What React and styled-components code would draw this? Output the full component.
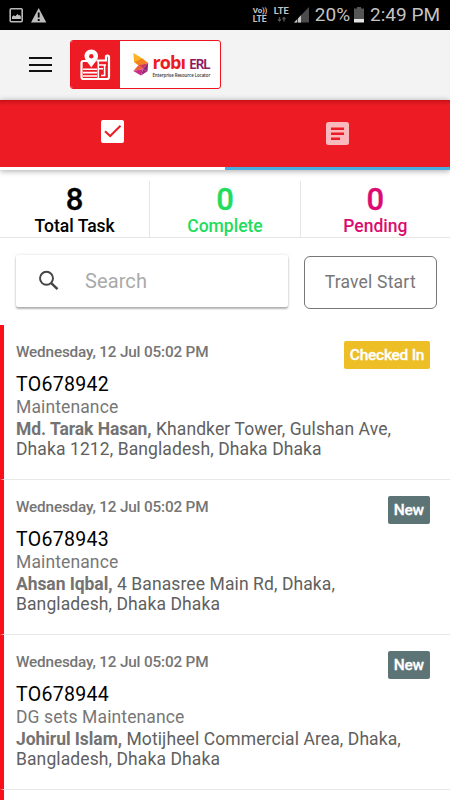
import React, { useState } from 'react';
import styled, { createGlobalStyle } from 'styled-components'

const GlobalStyle = createGlobalStyle`
    * { box-sizing:border-box; }
    body { margin:0; background:#fff; font-family:Roboto, sans-serif; }
    svg { display:block; flex:none; }
`

const AppBlock = styled.div`
    width:450px; height:800px;
    overflow:hidden;
    display:flex; flex-direction:column;
    background:#fff;
`

const StatusBarBlock = styled.div`
    flex:none;
    height:30px; padding:0 10px 0 9px;
    display:flex; align-items:center; justify-content:space-between;
    background:#000; color:#c4c4c4;
    .side { display:flex; align-items:center; height:30px; }
`

const StatusText = styled.span`
    font-size:19px; line-height:32px;
    margin-left:${props=>props.$gap}px;
    white-space:nowrap;
`

const NetworkBlock = styled.div`
    display:flex; flex-direction:column; gap:${props=>props.$rowGap || 0}px;
    width:${props=>props.$width}px; height:17px;
    margin-right:${props=>props.$gap}px;
    font-size:${props=>props.$size}px; font-weight:700; line-height:8px;
    white-space:nowrap;
    .vo { font-size:8px; letter-spacing:-.2px; }
`

const HeaderBlock = styled.header`
    flex:none;
    height:70px; padding:0 29px 1px;
    display:flex; align-items:center; gap:18.5px;
    background:#f3f3f3;
`

const MenuButton = styled.button`
    width:22.5px; height:15px; padding:0;
    border:0; background:none;
    display:flex; flex-direction:column; justify-content:space-between;
    span { height:2px; width:100%; background:#111; }
`

const LogoBlock = styled.div`
    width:151px; height:49px; 
    display:flex;
    border:1px solid #f0141e; border-radius:3px;
    background:#fff;
    overflow:hidden;
    .mark { width:49px; display:flex; align-items:center; justify-content:center; background:#ed1c24; }
    .brand { flex:1; display:flex; align-items:center; padding-left:12.5px; gap:4px; }
`

const BrandText = styled.div`
    padding-top:1px;
    .name { display:flex; align-items:baseline; height:18px; line-height:18px; white-space:nowrap; }
    .robi { font-family:"Open Sans", sans-serif; font-size:18px; font-weight:700; color:#ed1c24; letter-spacing:-.9px; width:36.5px; }
    .erl { font-family:"Noto Sans", sans-serif; font-size:14px; font-weight:600; color:#8d1763; letter-spacing:-1.4px; }
    .sub { margin-top:1px; font-family:"Open Sans", sans-serif; font-size:4.4px; font-weight:600; line-height:6px; color:#333; white-space:nowrap; letter-spacing:-.08px; }
`

const TabBlock = styled.div`
    flex:none;
    height:70px;
    display:flex;
    background:linear-gradient(#c60f16 0, #d8171e 2px, #ed1c24 6px);
    box-shadow:0 1px 6px rgba(0,0,0,.35);
    z-index:1;
`

const TabButton = styled.button`
    flex:1; padding:${props=>props.$top}px 0 0;
    border:0; border-bottom:3px solid ${props=>props.$line};
    background:none;
    display:flex; justify-content:center; align-items:flex-start;
`

const SummaryBlock = styled.div`
    flex:none;
    height:68px; padding-top:11px;
    display:flex;
    border-bottom:1px solid #e6e6e6;
`

const SummaryItem = styled.div`
    flex:1;
    text-align:center;
    color:${props=>props.$color};
    & + & { border-left:1px solid #e6e6e6; }
    strong { display:block; padding-top:1px; font-size:31px; font-weight:500; line-height:36px; -webkit-text-stroke:.3px; }
    span { display:block; margin-top:-1px; font-size:17.5px; font-weight:500; line-height:19px; }
`

const SearchRow = styled.div`
    flex:none;
    height:87px; padding:17px 13px 0 16px;
    display:flex; justify-content:space-between;
`

const SearchBox = styled.label`
    width:271.5px; height:52px; padding-left:22px;
    display:flex; align-items:center; 
    border-radius:2px;
    background:#fff;
    box-shadow:0 2px 2px rgba(0,0,0,.28), 0 0 3px rgba(0,0,0,.14);
    input {
        width:180px; margin-left:25px; padding:0;
        border:0; outline:0; background:none;
        font-family:inherit; font-size:20px; letter-spacing:.1px; color:#333;
        &::placeholder { color:#aaa; opacity:1; }
    }
`

const TravelButton = styled.button`
    width:133.5px; height:53px; margin-top:1px; padding:0 0 2px;
    border:1px solid #777; border-radius:6px;
    background:#fff; color:#777;
    font-family:inherit; font-size:17.5px; letter-spacing:.2px;
`

const TaskList = styled.ul`
    flex:1; min-height:0;
    margin:0; padding:0;
    list-style:none;
`

const TaskItem = styled.li`
    height:155px; padding:16px 20px 0 12px;
    border-left:4px solid #fb0f19;
    border-bottom:1px solid #e8e8e8;
    white-space:nowrap;
    .top { display:flex; justify-content:space-between; height:32px; }
    .date { font-size:15.3px; font-weight:500; line-height:22px; letter-spacing:-.17px; color:#757575; }
    .code { padding-top:1px; font-size:19.5px; line-height:22px; letter-spacing:.3px; color:#000; }
    .type { font-size:17.5px; line-height:22px; letter-spacing:.12px; color:#777; }
    .address { margin-top:1px; font-size:17.5px; line-height:20px; letter-spacing:.1px; color:#606060; }
    .address b { font-weight:700; color:#737373; letter-spacing:-.06px; }
`

const Badge = styled.span`
    width:${props=>props.$width}px; height:27.5px;
    border-radius:2px;
    background:${props=>props.$color};
    color:#fff; text-align:center;
    font-size:15.5px; font-weight:500; line-height:28px; letter-spacing:-.25px;
    -webkit-text-stroke:.3px #fff;
`

const statusColor = {
    'Checked In': { color:'#edbe26', width:86 },
    'New': { color:'#5c7476', width:42.5 }
}

const summary = [
    { label:'Total Task', count:8, color:'#000' },
    { label:'Complete', count:0, color:'#22dc5c' },
    { label:'Pending', count:0, color:'#db0b70' }
]

const tasks = [
    { code:'TO678942', type:'Maintenance', status:'Checked In', name:'Md. Tarak Hasan,', address:['Khandker Tower, Gulshan Ave,', 'Dhaka 1212, Bangladesh, Dhaka Dhaka'] },
    { code:'TO678943', type:'Maintenance', status:'New', name:'Ahsan Iqbal,', address:['4 Banasree Main Rd, Dhaka,', 'Bangladesh, Dhaka Dhaka'] },
    { code:'TO678944', type:'DG sets Maintenance', status:'New', name:'Johirul Islam,', address:['Motijheel Commercial Area, Dhaka,', 'Bangladesh, Dhaka Dhaka'] },
]

const StatusBar = () => (
    <StatusBarBlock>
        <div className="side">
            <svg width="40" height="17" viewBox="0 0 40 17">
                <rect x="1.2" y="1.7" width="12" height="13" rx="1" fill="none" stroke="#b9b9b9" strokeWidth="1.6" />
                <path d="M3 12V9.8l1.7-1.5 1.6 1L8.5 7l1.4 1.5.9-.4 1 1.5V12z" fill="#c4c4c4" />
                <path d="M29.7 1 37.3 15.5H22z" fill="#bdbdbd" />
                <path d="M29.7 5.5v5M29.7 12v2" stroke="#000" strokeWidth="1.8" />
            </svg>
        </div>
        <div className="side">
            <NetworkBlock $width={14} $gap={7} $size={8.6} $rowGap={.5}>
                <span className="vo">Vo))</span>
                <span>LTE</span>
            </NetworkBlock>
            <NetworkBlock $width={17} $gap={3} $size={9.3}>
                <span>LTE</span>
                <svg width="17" height="8" viewBox="0 0 17 8">
                    <path d="M5.5 2v4M4 4.3l1.5 1.8L7 4.3M10 6.5v-4M8.5 4.2 10 2.4l1.5 1.8" fill="none" stroke="#555" strokeWidth="1.3" />
                </svg>
            </NetworkBlock>
            <svg width="15" height="16" viewBox="0 0 15 16">
                <path d="M0 15.5 15 0v15.5z" fill="#4b4b4b" />
                <path d="M0 15.5 3 12.4v3.1zM4 15.5v-4.1l3-3.1v7.2z" fill="#c9c9c9" />
            </svg>
            <StatusText $gap={6}>20%</StatusText>
            <svg width="10" height="16" viewBox="0 0 10 16" style={{ marginLeft:4 }}>
                <path d="M3 0h4v1.5h3V12H0V1.5h3z" fill="#555" />
                <path d="M0 12h10v3.5H0z" fill="#e4e4e4" />
            </svg>
            <StatusText $gap={6}>2:49 PM</StatusText>
        </div>
    </StatusBarBlock>
)

const Logo = () => (
    <LogoBlock>
        <div className="mark">
            <svg width="31" height="32" viewBox="0 0 31 32">
                <path d="M7 12H3.2Q1.5 12 1.5 14v14q0 2 2 2H27q2 0 2-2V8q0-1.5-1.6-1.5T26 8v3.5h-9.5" fill="none" stroke="#fff" strokeWidth="2.2" />
                <path d="M3 20.2h14M3 23.6h14M3 27h14M18.3 12v17M19 16h7M19 19.8h4M24.6 16v10.5H21" fill="none" stroke="#fff" strokeWidth="1.6" />
                <path d="M11.3.5c-4 0-6.8 3-6.8 6.5 0 4.2 4.3 7 6.8 11.5 2.5-4.5 6.8-7.3 6.8-11.5 0-3.5-2.8-6.5-6.8-6.5z" fill="#fff" />
                <circle cx="11.3" cy="7.2" r="2.2" fill="#ed1c24" />
            </svg>
        </div>
        <div className="brand">
            <svg width="16" height="23" viewBox="0 0 16 23">
                <path d="M.3 0 9.5 5.5 6 11 1.2 9z" fill="#fdb020" />
                <path d="M9.5 5.5 15.2 10 5.5 12.5 1.2 9z" fill="#f58220" />
                <path d="M15.2 10 10 16 5.5 12.3z" fill="#d53a55" />
                <path d="M5.5 12.3 10 16 .3 18z" fill="#f15a3c" />
                <path d="M15.2 10 14.5 18.3 10 16z" fill="#8b2676" />
                <path d="M10 16 14.5 18.3 8 22.5z" fill="#a3297d" />
                <path d="M.3 18 10 16 8 22.5z" fill="#c72d87" />
            </svg>
            <BrandText>
                <div className="name"><span className="robi">robı</span><span className="erl">ERL</span></div>
                <div className="sub">Enterprise Resource Locator</div>
            </BrandText>
        </div>
    </LogoBlock>
)

const App = () => {
    const [keyword, setKeyword] = useState("")

    return (
        <AppBlock>
            <GlobalStyle />
            <StatusBar />
            <HeaderBlock>
                <MenuButton aria-label="menu"><span /><span /><span /></MenuButton>
                <Logo />
            </HeaderBlock>
            <TabBlock>
                <TabButton $top={20} $line="#fff">
                    <svg width="23" height="23" viewBox="0 0 23 23">
                        <rect width="23" height="23" rx="2" fill="#fff" />
                        <path d="M4 11.2 9.2 16 19.5 5.8" fill="none" stroke="#ed1c24" strokeWidth="2" />
                    </svg>
                </TabButton>
                <TabButton $top={22} $line="#4aaede">
                    <svg width="23" height="23" viewBox="0 0 23 23">
                        <rect width="23" height="23" rx="2.5" fill="#fab9bd" />
                        <path d="M5 6.7h13M5 11.7h13M5 16.7h9" stroke="#ed1c24" strokeWidth="2.5" />
                    </svg>
                </TabButton>
            </TabBlock>
            <SummaryBlock>
                {
                    summary.map((item, index)=>(
                        <SummaryItem key={index} $color={item.color}>
                            <strong>{item.count}</strong>
                            <span>{item.label}</span>
                        </SummaryItem>
                    ))
                }
            </SummaryBlock>
            <SearchRow>
                <SearchBox>
                    <svg width="22" height="22" viewBox="0 0 22 22">
                        <circle cx="8.5" cy="8.3" r="6.5" fill="none" stroke="#444" strokeWidth="1.9" />
                        <path d="M13 12.8 19.5 19.2" stroke="#444" strokeWidth="2.4" />
                    </svg>
                    <input placeholder="Search" value={keyword} onChange={(e)=>setKeyword(e.target.value)} />
                </SearchBox>
                <TravelButton>Travel Start</TravelButton>
            </SearchRow>
            <TaskList>
                {
                    tasks.map((item)=>(
                        <TaskItem key={item.code}>
                            <div className="top">
                                <span className="date">Wednesday, 12 Jul 05:02 PM</span>
                                <Badge $color={statusColor[item.status].color} $width={statusColor[item.status].width}>{item.status}</Badge>
                            </div>
                            <div className="code">{item.code}</div>
                            <div className="type">{item.type}</div>
                            <div className="address">
                                <b>{item.name}</b> {item.address[0]}<br />{item.address[1]}
                            </div>
                        </TaskItem>
                    ))
                }
                <TaskItem />
            </TaskList>
        </AppBlock>
    );
};

export default App;
